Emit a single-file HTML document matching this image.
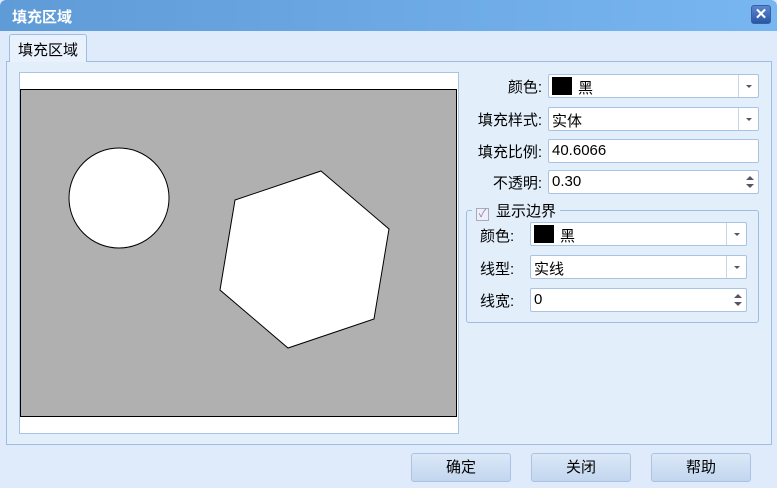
<!DOCTYPE html>
<html><head><meta charset="utf-8"><style>
*{box-sizing:border-box;margin:0;padding:0}
body{width:777px;height:488px;overflow:hidden;font-family:"Liberation Sans","Noto Sans CJK SC",sans-serif;font-size:15px;color:#000;background:#dfebfa;position:relative}
.abs{position:absolute}
.title{left:0;top:0;width:777px;height:31px;background:linear-gradient(90deg,#5f9bd6,#78b6f2);color:#fff;font-size:15px;font-weight:bold;padding:6px 0 0 12px;border-radius:6px 6px 0 0}
.close{left:751px;top:5px;width:20px;height:19px;background:linear-gradient(#5a86cf,#2a56a8);border:1px solid #3a5f9f;border-radius:3px;color:#fff;font-size:15px;font-weight:bold;text-align:center;line-height:17px}
.tab{left:9px;top:34px;width:78px;height:28px;background:#e8f1fc;border:1px solid #9ebde6;border-bottom:none;border-radius:3px 3px 0 0;padding:4px 0 0 8px;z-index:2}
.panel{left:6px;top:61px;width:766px;height:384px;border:1px solid #9ebde6;background:#e3eefb}
.inp{background:#fff;border:1px solid #a9c3e6;border-radius:2px;height:24px;padding:2px 0 0 3px}
.dd{position:absolute;right:0;top:0;width:20px;height:22px;border-left:1px solid #c8d6ea}
.dd:after{content:"";position:absolute;left:7px;top:10px;border:3px solid transparent;border-top:3px solid #556;}
.sw{display:inline-block;width:20px;height:18px;background:#000;vertical-align:top;margin:0 6px 0 0}
.lab{text-align:right;width:92px}
.spin{position:absolute;right:0;top:0;width:15px;height:22px}
.spin i{position:absolute;left:3px;border:4px solid transparent}
.btn{top:453px;width:100px;height:29px;border:1px solid #a9c3e6;border-radius:3px;background:linear-gradient(#dbe8f7,#c2d6ef);text-align:center;line-height:27px}
</style></head><body>
<div class="abs title">填充区域</div>
<div class="abs close">✕</div>
<div class="abs tab">填充区域</div>
<div class="abs panel"></div>
<div class="abs" style="left:19px;top:72px;width:440px;height:362px;background:#fff;border:1px solid #a9c3e6"></div>
<div class="abs" style="left:20px;top:89px;width:437px;height:328px;background:#b0b0b0;border:1px solid #000"></div>
<svg class="abs" style="left:0;top:0" width="777" height="488">
<circle cx="119" cy="198" r="50" fill="#fff" stroke="#000" stroke-width="1"/>
<polygon points="321,171 389,229 374,319 288,348 220,290 235,200" fill="#fff" stroke="#000" stroke-width="1"/>
</svg>
<div class="abs lab" style="left:450px;top:76px">颜色:</div>
<div class="abs inp" style="left:548px;top:74px;width:211px"><span class="sw"></span>黑<div class="dd"></div></div>
<div class="abs lab" style="left:450px;top:109px">填充样式:</div>
<div class="abs inp" style="left:548px;top:107px;width:211px">实体<div class="dd"></div></div>
<div class="abs lab" style="left:450px;top:141px">填充比例:</div>
<div class="abs inp" style="left:548px;top:139px;width:211px">40.6066</div>
<div class="abs lab" style="left:450px;top:172px">不透明:</div>
<div class="abs inp" style="left:548px;top:170px;width:211px">0.30<div class="spin"><i style="top:1px;border-bottom:4px solid #556"></i><i style="top:13px;border-top:4px solid #556"></i></div></div>
<div class="abs" style="left:466px;top:210px;width:293px;height:113px;border:1px solid #9ebde6;border-radius:3px"></div>
<div class="abs" style="left:472px;top:200px;background:#e3eefb;padding:0 4px;"><span style="display:inline-block;width:13px;height:13px;border:1px solid #aab;background:#eef;vertical-align:-1px;margin-right:7px;color:#889;font-size:11px;line-height:11px;text-align:center">✓</span>显示边界</div>
<div class="abs" style="left:480px;top:225px">颜色:</div>
<div class="abs inp" style="left:530px;top:222px;width:217px"><span class="sw"></span>黑<div class="dd"></div></div>
<div class="abs" style="left:480px;top:258px">线型:</div>
<div class="abs inp" style="left:530px;top:255px;width:217px">实线<div class="dd"></div></div>
<div class="abs" style="left:480px;top:290px">线宽:</div>
<div class="abs inp" style="left:530px;top:288px;width:217px">0<div class="spin"><i style="top:1px;border-bottom:4px solid #556"></i><i style="top:13px;border-top:4px solid #556"></i></div></div>
<div class="abs btn" style="left:411px">确定</div>
<div class="abs btn" style="left:531px">关闭</div>
<div class="abs btn" style="left:651px">帮助</div>
</body></html>
